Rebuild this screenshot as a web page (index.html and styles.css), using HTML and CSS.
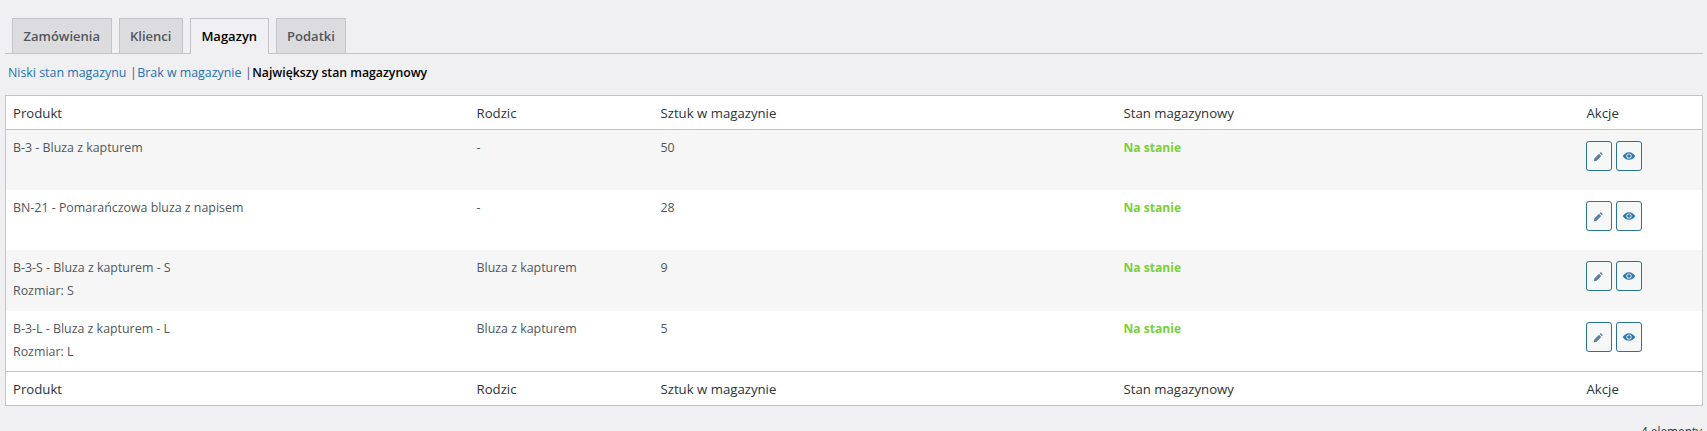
FILE: index.html
```html
<!DOCTYPE html>
<html lang="pl">
<head>
    <meta charset="UTF-8">
    <title>Magazyn</title>
    <link rel="stylesheet" href="styles.css">
</head>
<body>
    <svg class="icon-defs">
        <symbol id="icon-pencil" viewBox="0 0 20 20"><path d="M14 2l4 4-1.800 1.800-4-4zM10.900 5.100l4 4-8.400 8.400-5 1 1-5z"/></symbol>
        <symbol id="icon-eye" viewBox="0 0 20 20"><path fill-rule="evenodd" d="M10 4.500c4 0 7.200 2.600 9 5.500-1.800 2.900-5 5.500-9 5.500s-7.200-2.600-9-5.500c1.800-2.900 5-5.500 9-5.500zM10 6.300a3.700 3.700 0 1 0 0 7.400 3.700 3.700 0 0 0 0-7.400z"/><circle cx="10" cy="10" r="2.600"/></symbol>
    </svg>

    <div class="wrap">
        <nav class="tabs">
            <a class="tab" href="#">Zamówienia</a>
            <a class="tab" href="#">Klienci</a>
            <a class="tab tab-active" href="#">Magazyn</a>
            <a class="tab" href="#">Podatki</a>
        </nav>

        <ul class="subnav">
            <li><a href="#">Niski stan magazynu</a></li>
            <li class="sep">|</li>
            <li><a href="#">Brak w magazynie</a></li>
            <li class="sep">|</li>
            <li class="current">Największy stan magazynowy</li>
        </ul>

        <table class="stock-table">
            <colgroup>
                <col class="col-wide">
                <col class="col-parent">
                <col class="col-wide">
                <col class="col-wide">
                <col>
            </colgroup>
            <thead>
                <tr>
                    <th>Produkt</th>
                    <th>Rodzic</th>
                    <th>Sztuk w magazynie</th>
                    <th>Stan magazynowy</th>
                    <th>Akcje</th>
                </tr>
            </thead>
            <tbody>
                <tr>
                    <td>B-3 - Bluza z kapturem</td>
                    <td>-</td>
                    <td>50</td>
                    <td><span class="in-stock">Na stanie</span></td>
                    <td>
                        <div class="actions">
                            <a class="action" href="#"><svg class="pencil"><use href="#icon-pencil"/></svg></a>
                            <a class="action" href="#"><svg class="eye"><use href="#icon-eye"/></svg></a>
                        </div>
                    </td>
                </tr>
                <tr>
                    <td>BN-21 - Pomarańczowa bluza z napisem</td>
                    <td>-</td>
                    <td>28</td>
                    <td><span class="in-stock">Na stanie</span></td>
                    <td>
                        <div class="actions">
                            <a class="action" href="#"><svg class="pencil"><use href="#icon-pencil"/></svg></a>
                            <a class="action" href="#"><svg class="eye"><use href="#icon-eye"/></svg></a>
                        </div>
                    </td>
                </tr>
                <tr class="row-tall">
                    <td>B-3-S - Bluza z kapturem - S<div class="variant">Rozmiar: S</div></td>
                    <td>Bluza z kapturem</td>
                    <td>9</td>
                    <td><span class="in-stock">Na stanie</span></td>
                    <td>
                        <div class="actions">
                            <a class="action" href="#"><svg class="pencil"><use href="#icon-pencil"/></svg></a>
                            <a class="action" href="#"><svg class="eye"><use href="#icon-eye"/></svg></a>
                        </div>
                    </td>
                </tr>
                <tr>
                    <td>B-3-L - Bluza z kapturem - L<div class="variant">Rozmiar: L</div></td>
                    <td>Bluza z kapturem</td>
                    <td>5</td>
                    <td><span class="in-stock">Na stanie</span></td>
                    <td>
                        <div class="actions">
                            <a class="action" href="#"><svg class="pencil"><use href="#icon-pencil"/></svg></a>
                            <a class="action" href="#"><svg class="eye"><use href="#icon-eye"/></svg></a>
                        </div>
                    </td>
                </tr>
            </tbody>
            <tfoot>
                <tr>
                    <th>Produkt</th>
                    <th>Rodzic</th>
                    <th>Sztuk w magazynie</th>
                    <th>Stan magazynowy</th>
                    <th>Akcje</th>
                </tr>
            </tfoot>
        </table>

        <div class="count">4 elementy</div>
    </div>
</body>
</html>
```

FILE: styles.css
```css
html, body {
    height: 100%;
    overflow: hidden;
}

body {
    margin: 0;
    background: #f0f0f2;
    color: #50575e;
    font-family: "Open Sans", sans-serif;
    font-size: 12.4px;
}

a {
    text-decoration: none;
}

.icon-defs {
    display: none;
}

.wrap {
    padding: 18px 4px 0 5px;
}

.tabs {
    display: flex;
    gap: 7px;
    padding-left: 7px;
    height: 35px;
    border-bottom: 1px solid #c3c4c7;
}

.tab {
    height: 34px;
    padding: 0 10.5px;
    line-height: 34px;
    font-size: 13px;
    font-weight: 600;
    color: #50575e;
    background: #dcdcde;
    border: 1px solid #c3c4c7;
    border-bottom: none;
}

.tab-active {
    height: 35px;
    color: #000;
    background: #f0f0f2;
}

.subnav {
    display: flex;
    list-style: none;
    margin: 0;
    padding: 10px 0 0 3px;
    height: 31px;
    line-height: 18px;
}

.subnav a {
    color: #2271b1;
}

.subnav .sep {
    margin: 0 0.5px 0 3.5px;
}

.subnav .current {
    color: #000;
    font-size: 12.25px;
    font-weight: 600;
}

.stock-table {
    width: 1698px;
    table-layout: fixed;
    border-collapse: collapse;
    background: #fff;
    border: 1px solid #c3c4c7;
    box-sizing: border-box;
}

.col-wide {
    width: 463px;
}

.col-parent {
    width: 184px;
}

.stock-table th {
    padding: 9px 8px 7px;
    height: 17px;
    line-height: 17px;
    font-size: 13.2px;
    font-weight: 400;
    text-align: left;
    color: #2c3338;
}

.stock-table thead th {
    border-bottom: 1px solid #c3c4c7;
}

.stock-table tfoot th {
    border-top: 1px solid #c3c4c7;
}

.stock-table td {
    padding: 9px 8px 8px;
    height: 43px;
    line-height: 18px;
    vertical-align: top;
}

.stock-table .row-tall td {
    height: 44px;
}

.stock-table th:first-child,
.stock-table td:first-child {
    padding-left: 7px;
}

.stock-table tbody tr:nth-child(odd) {
    background: #f6f6f7;
}

.variant {
    margin-top: 5px;
}

.in-stock {
    color: #7ad03a;
    font-size: 12.1px;
    font-weight: 700;
}

.actions {
    display: flex;
    gap: 4px;
    margin-left: -1px;
    padding-top: 2px;
}

.action {
    display: flex;
    align-items: center;
    justify-content: center;
    width: 24px;
    height: 28px;
    background: #f6f7f7;
    border: 1px solid #2a7396;
    border-radius: 3px;
}

.pencil {
    width: 11px;
    height: 11px;
    fill: #5b7da0;
}

.eye {
    width: 14px;
    height: 14px;
    fill: #2f78ad;
}

.count {
    margin-top: 16px;
    padding-right: 1px;
    text-align: right;
    font-size: 11.8px;
    color: #2c3338;
    line-height: 18px;
}
```
